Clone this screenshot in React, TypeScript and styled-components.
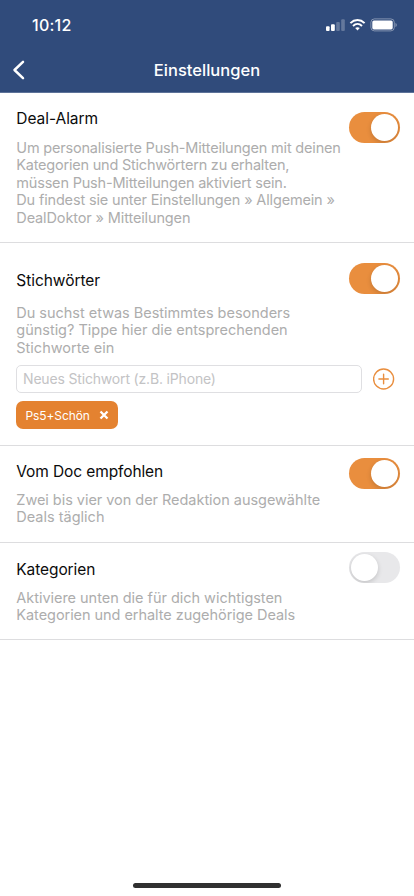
import React, { useState } from 'react';
import styled, { createGlobalStyle } from 'styled-components';

const GlobalStyle = createGlobalStyle`
  * { box-sizing: border-box; }
  body { margin: 0; background: #fff; font-family: Inter, "Liberation Sans", sans-serif; }
  button, input { font-family: inherit; }
`;

const Screen = styled.main`
  width: 414px;
  height: 896px;
  display: flex;
  flex-direction: column;
  background: #fff;
  overflow: hidden;
`;

const Header = styled.header`
  height: 93px;
  background: #304b7b;
  border-bottom: 1px solid #5d7299;
  color: #fff;
`;

const StatusBar = styled.div`
  height: 48px;
  display: flex;
  align-items: center;
  justify-content: space-between;
  padding: 2px 17px 0 32px;
`;

const Clock = styled.time`
  font-size: 16px;
  font-weight: 550;
  line-height: 20px;
  letter-spacing: 0.25px;
`;

const StatusIcons = styled.div`
  display: flex;
  align-items: center;
`;

const NavBar = styled.nav`
  height: 44px;
  display: grid;
  grid-template-columns: 44px 1fr 44px;
  align-items: center;
`;

const BackButton = styled.button`
  border: 0;
  padding: 0 0 0 12px;
  background: none;
  display: flex;
`;

const PageTitle = styled.h1`
  margin: 0;
  text-align: center;
  font-size: 16.5px;
  line-height: 20px;
  font-weight: 550;
  letter-spacing: 0.02px;
`;

const Section = styled.section<{ $height: number; $top: number }>`
  height: ${p => p.$height}px;
  padding: ${p => p.$top}px 14px 0 16px;
  border-bottom: 1px solid #dddddf;
`;

const SectionRow = styled.div`
  display: flex;
  justify-content: space-between;
  align-items: flex-start;
`;

const SectionText = styled.div<{ $top: number }>`
  margin-top: ${p => p.$top}px;
  padding-left: 0.3px;
  white-space: nowrap;
  width: 330px;
`;

const SectionTitle = styled.h2<{ $gap: number; $track: number }>`
  margin: 0 0 ${p => p.$gap}px;
  font-size: 15.5px;
  line-height: 20px;
  font-weight: 400;
  letter-spacing: ${p => p.$track}px;
  color: #0b0b0b;
`;

const Description = styled.p`
  margin: 0;
  font-size: 14.5px;
  line-height: 17.4px;
  color: #adadad;
`;

const Line = styled.span<{ $track: number }>`
  display: block;
  letter-spacing: ${p => p.$track}px;
`;

const Track = styled.button<{ $on: boolean }>`
  flex: none;
  width: 51px;
  height: 31px;
  padding: 2px;
  border: 0;
  border-radius: 16px;
  display: flex;
  justify-content: ${p => (p.$on ? 'flex-end' : 'flex-start')};
  background: ${p => (p.$on ? '#e98e3e' : '#e8e8ea')};
  overflow: hidden;
`;

const Knob = styled.span`
  width: 27px;
  height: 27px;
  border-radius: 50%;
  background: #fff;
  box-shadow: 0 2px 5px rgba(0, 0, 0, 0.16);
`;

const KeywordForm = styled.div`
  display: flex;
  align-items: center;
  gap: 11px;
  margin-top: 9px;
`;

const KeywordInput = styled.input`
  width: 346px;
  height: 28px;
  border: 1px solid #dfdfe2;
  border-radius: 5px;
  padding: 0 6px 1px;
  font-size: 14px;
  letter-spacing: -0.17px;
  outline: none;
  background: #fff;
  &::placeholder { color: #c3c3c5; opacity: 1; }
`;

const IconButton = styled.button`
  border: 0;
  padding: 0;
  background: none;
  display: flex;
`;

const Chip = styled.div`
  display: flex;
  align-items: center;
  justify-content: space-between;
  width: 102px;
  height: 28px;
  margin-top: 8px;
  padding: 0 9px 0 9.5px;
  border-radius: 7px;
  background: #e48230;
  color: #fff;
  font-size: 12px;
  letter-spacing: -0.1px;
  white-space: nowrap;
`;

const HomeArea = styled.footer`
  margin-top: auto;
  display: flex;
  justify-content: center;
  padding-bottom: 8px;
`;

const HomeIndicator = styled.div`
  width: 148px;
  height: 5px;
  border-radius: 3px;
  background: #303030;
`;

type Text = [string, number];

interface SettingProps {
  title: Text;
  lines: Text[];
  height: number;
  top: number;
  textTop: number;
  gap: number;
  initial: boolean;
  children?: React.ReactNode;
}

function Setting({ title, lines, height, top, textTop, gap, initial, children }: SettingProps) {
  const [on, setOn] = useState(initial);
  return (
    <Section $height={height} $top={top}>
      <SectionRow>
        <SectionText $top={textTop}>
          <SectionTitle $gap={gap} $track={title[1]}>{title[0]}</SectionTitle>
          <Description>
            {lines.map(([text, track]) => (
              <Line key={text} $track={track}>{text}</Line>
            ))}
          </Description>
        </SectionText>
        <Track $on={on} role="switch" aria-checked={on} aria-label={title[0]} onClick={() => setOn(!on)}>
          <Knob />
        </Track>
      </SectionRow>
      {children}
    </Section>
  );
}

function PhoneStatus() {
  return (
    <StatusIcons>
      <svg width="72" height="14" viewBox="0 0 72 14" fill="#fff">
        <rect x="1" y="8.3" width="3.6" height="4.7" rx="1" />
        <rect x="6" y="6.2" width="3.8" height="6.8" rx="1" />
        <rect x="11.2" y="3.9" width="3.6" height="9.1" rx="1" opacity=".25" />
        <rect x="16.2" y="1.2" width="3.6" height="11.8" rx="1" opacity=".25" />
        <g fill="none" stroke="#fff" strokeWidth="2">
          <path d="M25.4 5.1c4.2-4 10-4 14.2 0" />
          <path d="M28 7.9c2.7-2.5 6.3-2.5 9 0" />
        </g>
        <path d="M30.2 10.1c1.4-1.2 3.2-1.2 4.6 0L32.5 12.5Z" />
        <rect x="45.9" y=".9" width="23.4" height="12" rx="3.5" fill="none" stroke="#fff" opacity=".4" />
        <rect x="47.3" y="2.4" width="20.4" height="9" rx="1.6" />
        <path d="M70.5 5c1.6.6 1.6 3.4 0 4Z" opacity=".45" />
      </svg>
    </StatusIcons>
  );
}

export default function App() {
  return (
    <Screen>
      <GlobalStyle />
      <Header>
        <StatusBar>
          <Clock>10:12</Clock>
          <PhoneStatus />
        </StatusBar>
        <NavBar>
          <BackButton aria-label="Zurück">
            <svg width="14" height="20" viewBox="0 0 14 20" fill="none" stroke="#fff" strokeWidth="2.5" strokeLinecap="round" strokeLinejoin="round">
              <path d="M11 1.8 2.5 10 11 18.2" />
            </svg>
          </BackButton>
          <PageTitle>Einstellungen</PageTitle>
        </NavBar>
      </Header>
      <Setting
        title={['Deal-Alarm', -0.05]}
        lines={[
          ['Um personalisierte Push-Mitteilungen mit deinen', -0.19],
          ['Kategorien und Stichwörtern zu erhalten,', -0.22],
          ['müssen Push-Mitteilungen aktiviert sein.', -0.19],
          ['Du findest sie unter Einstellungen » Allgemein »', -0.16],
          ['DealDoktor » Mitteilungen', -0.13],
        ]}
        height={150} top={19} textTop={-3} gap={10} initial
      />
      <Setting
        title={['Stichwörter', -0.05]}
        lines={[
          ['Du suchst etwas Bestimmtes besonders', -0.02],
          ['günstig? Tippe hier die entsprechenden', -0.02],
          ['Stichworte ein', 0],
        ]}
        height={203} top={20} textTop={8} gap={13} initial
      >
        <KeywordForm>
          <KeywordInput placeholder="Neues Stichwort (z.B. iPhone)" />
          <IconButton aria-label="Stichwort hinzufügen">
            <svg width="22" height="22" viewBox="0 0 22 22" fill="none" stroke="#e98e3e" strokeWidth="1.4">
              <circle cx="10.6" cy="11" r="10" />
              <path d="M5.9 11h9.4M10.6 6.3v9.4" strokeLinecap="round" />
            </svg>
          </IconButton>
        </KeywordForm>
        <Chip>
          <span>Ps5+Schön</span>
          <IconButton aria-label="Stichwort entfernen">
            <svg width="10" height="10" viewBox="0 0 10 10" stroke="#fff" strokeWidth="2.3">
              <path d="m1.5 1.5 7 7m0-7-7 7" />
            </svg>
          </IconButton>
        </Chip>
      </Setting>
      <Setting
        title={['Vom Doc empfohlen', -0.11]}
        lines={[
          ['Zwei bis vier von der Redaktion ausgewählte', -0.04],
          ['Deals täglich', 0],
        ]}
        height={97} top={12} textTop={4} gap={9} initial
      />
      <Setting
        title={['Kategorien', -0.1]}
        lines={[
          ['Aktiviere unten die für dich wichtigsten', -0.03],
          ['Kategorien und erhalte zugehörige Deals', -0.05],
        ]}
        height={97} top={9} textTop={7.5} gap={9} initial={false}
      />
      <HomeArea>
        <HomeIndicator />
      </HomeArea>
    </Screen>
  );
}
